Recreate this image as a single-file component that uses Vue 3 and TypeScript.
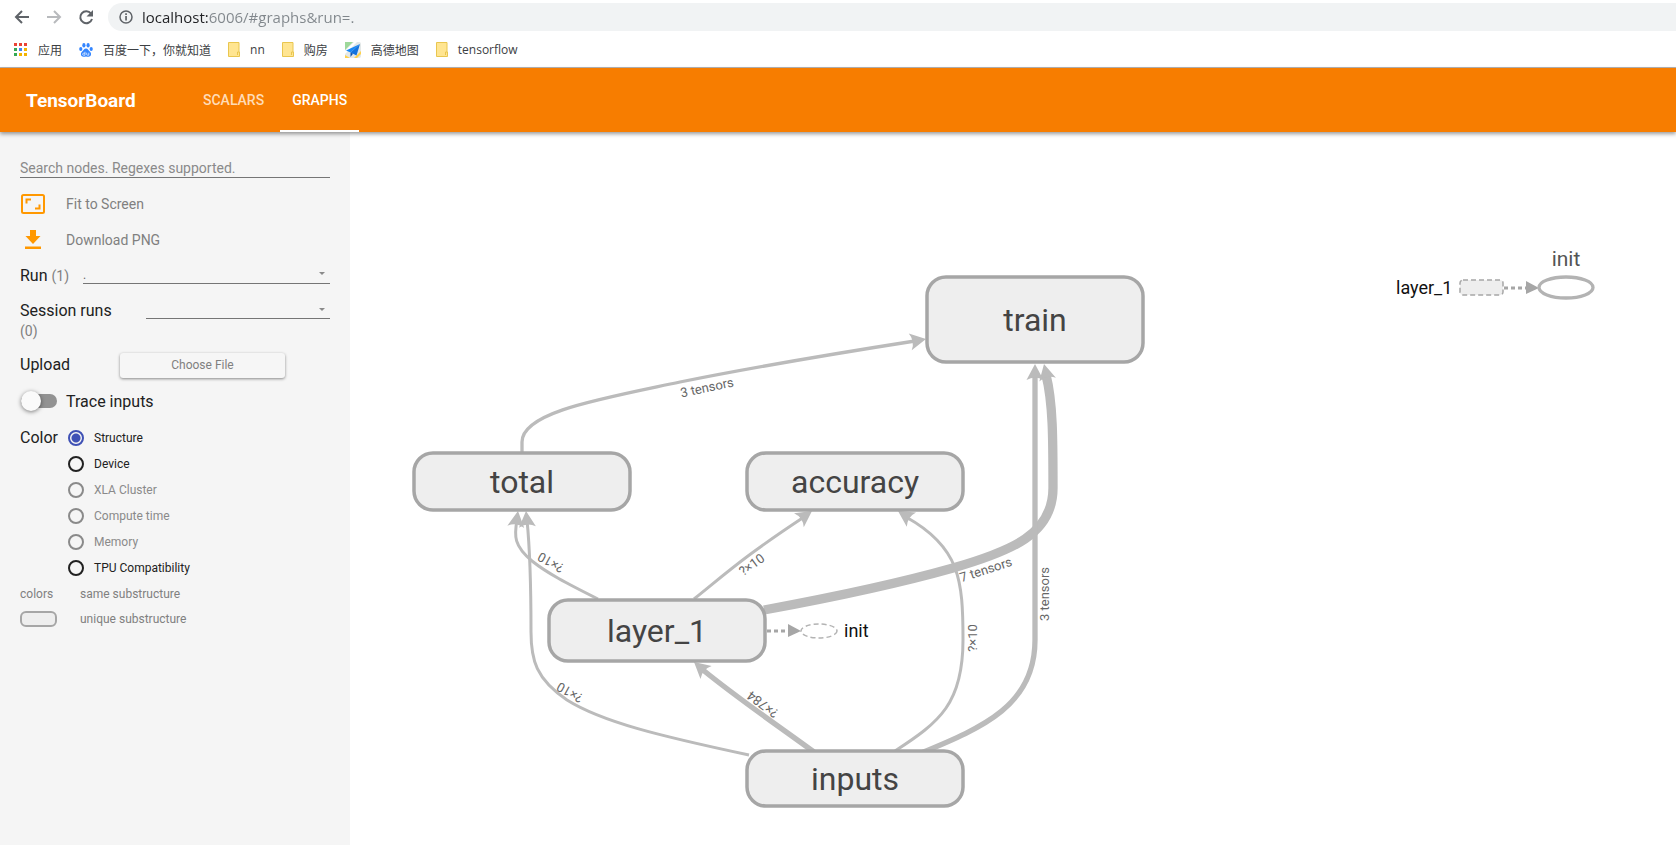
<script setup lang="ts">
import { ref } from 'vue'

interface GraphNode { name: string; x: number; y: number; h: number; base: number }
interface Edge { d: string; width: number; tip: [number, number]; angle: number; label: string; at: [number, number]; turn: number }
interface ColorOption { label: string; disabled: boolean }

const url = ref('localhost:6006/#graphs&run=.')
const search = ref('')
const run = ref('.')
const session = ref('')
const traceInputs = ref(false)
const colorBy = ref('Structure')

const colorOptions: ColorOption[] = [
  { label: 'Structure', disabled: false },
  { label: 'Device', disabled: false },
  { label: 'XLA Cluster', disabled: true },
  { label: 'Compute time', disabled: true },
  { label: 'Memory', disabled: true },
  { label: 'TPU Compatibility', disabled: false },
]

const nodeWidth = 216
const nodes: GraphNode[] = [
  { name: 'train', x: 927, y: 277, h: 85, base: 331 },
  { name: 'total', x: 414, y: 453, h: 57, base: 493 },
  { name: 'accuracy', x: 747, y: 453, h: 57, base: 493 },
  { name: 'layer_1', x: 549, y: 600, h: 61, base: 642 },
  { name: 'inputs', x: 747, y: 751, h: 55, base: 790 },
]

const edges: Edge[] = [
  { d: 'M522 452V442C522 412 600 399 680 382C740 370 800 359 915 341', width: 3.3, tip: [926, 339], angle: -10, label: '3 tensors', at: [707, 388], turn: -12 },
  { d: 'M598 599C566 583 547 573 532 561C514 546 514 536 517 520', width: 3, tip: [518, 511], angle: -82, label: '?×10', at: [551, 562], turn: 209 },
  { d: 'M749 755C660 736 602 722 567 700C536 679 531 660 531 632C531 590 530 550 527 520', width: 3, tip: [526, 511], angle: -95, label: '?×10', at: [570, 692], turn: 209 },
  { d: 'M694 599C730 570 745 556 804 517', width: 3, tip: [812, 511], angle: -35, label: '?×10', at: [752, 565], turn: -36 },
  { d: 'M895 751C940 722 963 703 963 640C963 580 960 547 906 517', width: 3, tip: [898, 511], angle: -147, label: '?×10', at: [973, 638], turn: -90 },
  { d: 'M764 610C840 596 900 583 953 568C1012 551 1053 534 1053 488C1053 440 1053 402 1046 375', width: 9.3, tip: [1044, 364], angle: -103, label: '7 tensors', at: [986, 570], turn: -18 },
  { d: 'M921 753C984 727 1035 705 1035 640V375', width: 5.3, tip: [1035, 364], angle: -90, label: '3 tensors', at: [1045, 594], turn: -90 },
  { d: 'M814 752C770 720 740 700 703 670', width: 5.3, tip: [694, 662], angle: -139, label: '?×784', at: [763, 704], turn: 217 },
]
</script>

<template>
  <div class="window">
    <div class="toolbar">
      <button class="nav" aria-label="Back">
        <svg viewBox="0 0 16 16" width="16" height="16"><path d="M15 8H2M8 2L2 8l6 6" fill="none" stroke="#5f6368" stroke-width="2" /></svg>
      </button>
      <button class="nav" aria-label="Forward">
        <svg viewBox="0 0 16 16" width="16" height="16"><path d="M1 8h13M8 2l6 6-6 6" fill="none" stroke="#b8babd" stroke-width="2" /></svg>
      </button>
      <button class="nav" aria-label="Reload">
        <svg viewBox="0 0 16 16" width="16" height="16">
          <path d="M13 4.5A6 6 0 1 0 14 10" fill="none" stroke="#5f6368" stroke-width="2" />
          <path d="M15 1v6.500H8.500z" fill="#5f6368" />
        </svg>
      </button>
      <label class="address">
        <svg viewBox="0 0 16 16" width="16" height="16">
          <circle cx="8" cy="8" r="6" fill="none" stroke="#5f6368" stroke-width="1.500" />
          <path d="M7.200 7h1.700v4.500H7.200zM7.200 4.300h1.700V6H7.200z" fill="#5f6368" />
        </svg>
        <input v-model="url" type="text" aria-label="Address" />
      </label>
    </div>

    <nav class="bookmarks" aria-label="Bookmarks">
      <a href="#">
        <svg viewBox="0 0 14 14" width="14" height="14">
          <path d="M0 0h3v3H0zM5 0h3v3H5zM10 0h3v3h-3z" fill="#ea4335" />
          <path d="M0 5h3v3H0zM0 10h3v3H0z" fill="#34a853" />
          <path d="M5 5h3v3H5z" fill="#4285f4" /><path d="M5 10h3v3H5zM10 5h3v3h-3zM10 10h3v3h-3z" fill="#f4b400" />
        </svg>应用</a>
      <a href="#">
        <svg viewBox="0 0 14 14" width="14" height="14" fill="#3385ff">
          <ellipse cx="1.800" cy="6" rx="1.600" ry="2.100" /><ellipse cx="4.900" cy="2.300" rx="1.600" ry="2.200" />
          <ellipse cx="9.100" cy="2.300" rx="1.600" ry="2.200" /><ellipse cx="12.200" cy="6" rx="1.600" ry="2.100" />
          <path d="M7 5.500c2 0 2.600 2 4 3.300 2 1.800 1 5-1.500 5-1 0-1.500-.3-2.500-.3s-1.500.3-2.500.3C2 13.800 1 10.600 3 8.800 4.400 7.500 5 5.500 7 5.500z" />
          <path d="M6 8.700v3.500H4.600a1 1 0 0 1 0-2H6M7.700 9.700v1.700q0 .8.800.8h1.300V9.700" fill="none" stroke="#fff" stroke-width=".7" />
        </svg>百度一下，你就知道</a>
      <a href="#"><svg viewBox="0 0 12 15" width="12" height="15"><path d="M.5.5h10.500v9.500h.5v4.500H.5z" fill="#ffe591" stroke="#e9c64f" /><path d="M9.500 13v-3H11" fill="none" stroke="#e9c64f" /></svg>nn</a>
      <a href="#"><svg viewBox="0 0 12 15" width="12" height="15"><path d="M.5.5h10.500v9.500h.5v4.500H.5z" fill="#ffe591" stroke="#e9c64f" /><path d="M9.500 13v-3H11" fill="none" stroke="#e9c64f" /></svg>购房</a>
      <a href="#">
        <svg viewBox="0 0 16 16" width="16" height="16">
          <rect width="16" height="16" rx="2" fill="#e3e8e8" /><path d="M0 0h8L0 8z" fill="#9ed89a" /><path d="M0 9l9-9h3L0 12z" fill="#fff" /><path d="M9 16l7-7v3l-4 4z" fill="#ffd24d" /><path d="M0 13l5 3H0z" fill="#ffd24d" />
          <path d="M15 2L1 8.500l4.500 2z" fill="#1787f5" /><path d="M15 2L5.500 10.500l6 3z" fill="#1273df" /><path d="M5.500 10.500V15l2.500-3.300z" fill="#0a51ad" />
        </svg>高德地图</a>
      <a href="#"><svg viewBox="0 0 12 15" width="12" height="15"><path d="M.5.5h10.500v9.500h.5v4.500H.5z" fill="#ffe591" stroke="#e9c64f" /><path d="M9.500 13v-3H11" fill="none" stroke="#e9c64f" /></svg>tensorflow</a>
    </nav>

    <header class="header">
      <h1>TensorBoard</h1>
      <a href="#scalars" class="tab">SCALARS</a>
      <a href="#graphs" class="tab active" aria-current="page">GRAPHS</a>
    </header>

    <div class="content">
      <aside class="sidebar">
        <input v-model="search" class="search" type="text" placeholder="Search nodes. Regexes supported." aria-label="Search nodes" />
        <button class="action">
          <svg viewBox="0 0 24 20" width="24" height="20"><rect x="1" y="1" width="22" height="18" rx="1.500" fill="none" stroke="#ff9800" stroke-width="2" /><path d="M5.500 9.500v-4H10M18.500 10.500v4H14" fill="none" stroke="#ff9800" stroke-width="2" /></svg>
          Fit to Screen
        </button>
        <button class="action">
          <svg viewBox="0 0 24 20" width="24" height="20"><path d="M9 0h6v6h4.500L12 14 4.500 6H9zM4 16.500h16V19H4z" fill="#ff9800" /></svg>
          Download PNG
        </button>

        <div class="row">
          <label for="run" class="title">Run <small>(1)</small></label>
          <span class="dropdown run"><select id="run" v-model="run"><option value=".">.</option></select></span>
        </div>
        <div class="row session">
          <label for="session" class="title">Session runs <small>(0)</small></label>
          <span class="dropdown"><select id="session" v-model="session"><option value=""></option></select></span>
        </div>
        <div class="row upload">
          <span class="title">Upload</span>
          <button class="choose">Choose File</button>
        </div>
        <label class="trace"><input v-model="traceInputs" type="checkbox" role="switch" />Trace inputs</label>

        <div class="colors" role="radiogroup" aria-labelledby="color-title">
          <span id="color-title" class="title">Color</span>
          <div>
            <label v-for="o in colorOptions" :key="o.label" class="option" :class="{ disabled: o.disabled }">
              <input v-model="colorBy" type="radio" name="color" :value="o.label" :disabled="o.disabled" />{{ o.label }}
            </label>
          </div>
        </div>
        <div class="legend"><span class="key">colors</span>same substructure</div>
        <div class="legend"><span class="key"><i class="swatch"></i></span>unique substructure</div>
      </aside>

      <main class="graph">
        <svg class="scene" viewBox="350 132 1326 713" preserveAspectRatio="xMinYMin meet" role="img" aria-label="Main graph">
          <g v-for="(e, i) in edges" :key="i">
            <path :d="e.d" class="edge" :stroke-width="e.width" />
            <path d="M0 0L-16 -8.500Q-11 0 -16 8.500Z" class="head" :transform="`translate(${e.tip[0]} ${e.tip[1]}) rotate(${e.angle})`" />
          </g>
          <text v-for="(e, i) in edges" :key="'l' + i" y="4" class="edge-label" :transform="`translate(${e.at[0]} ${e.at[1]}) rotate(${e.turn})`">{{ e.label }}</text>

          <g v-for="n in nodes" :key="n.name">
            <rect :x="n.x" :y="n.y" :width="nodeWidth" :height="n.h" rx="19" class="node" />
            <text :x="n.x + nodeWidth / 2" :y="n.base" class="node-label">{{ n.name }}</text>
          </g>

          <path d="M767 631H788" class="reference" />
          <path d="M788 624l13 7-13 6z" class="reference-head" />
          <ellipse cx="819" cy="631" rx="18" ry="7" class="ghost" />
          <text x="844" y="637" class="annotation">init</text>

          <text x="1396" y="294" class="annotation">layer_1</text>
          <rect x="1460" y="280" width="43" height="15" rx="3" class="ghost filled" />
          <path d="M1504 288H1526" class="reference" />
          <path d="M1526 281l13 7-13 6z" class="reference-head" />
          <ellipse cx="1566" cy="287.500" rx="27" ry="10.500" class="op" />
          <text x="1566" y="266" class="op-label">init</text>
        </svg>
      </main>
    </div>
  </div>
</template>

<style>
html, body { margin: 0; height: 100%; }
#app { height: 100%; }
</style>

<style scoped>
.window { min-height: 100vh; display: flex; flex-direction: column; background: #fff; font-family: Roboto, "Noto Sans CJK SC", sans-serif; }
button, input, select { font: inherit; margin: 0; padding: 0; border: 0; background: none; outline: none; color: inherit; border-radius: 0; }
button { cursor: pointer; }
a { text-decoration: none; color: inherit; }
svg { display: block; flex: none; }

.toolbar { display: flex; align-items: center; height: 34px; padding-left: 14px; }
.nav { width: 16px; height: 16px; margin-right: 16px; }
.nav:nth-child(3) { margin-right: 14px; }
.address { display: flex; align-items: center; flex: 1; height: 28px; padding-left: 10px; border-radius: 14px 0 0 14px; background: #f1f3f4; }
.address svg { margin-right: 8px; }
.address input { flex: 1; height: 24px; font: 15px "Open Sans", "Noto Sans", sans-serif; color: transparent; background: linear-gradient(90deg, #202124 66px, #80868b 66px); background-clip: text; -webkit-background-clip: text; }

.bookmarks { display: flex; align-items: center; height: 31px; padding: 0 14px 2px; border-bottom: 1px solid #b6b4b4; font: 12px "Open Sans", "Noto Sans CJK SC", sans-serif; color: #3c4043; }
.bookmarks a { display: flex; align-items: center; gap: 10px; margin-right: 17px; white-space: nowrap; }

.header { position: relative; z-index: 1; display: flex; align-items: center; height: 64px; padding-left: 26px; background: #f77d00; color: #fff; box-shadow: 0 2px 4px rgba(0, 0, 0, .4); }
.header h1 { margin: 0; width: 165px; font-size: 19px; font-weight: 700; }
.tab { box-sizing: border-box; display: flex; align-items: center; height: 64px; margin-right: 4px; padding: 2px 12px 0; border-bottom: 2px solid transparent; font-size: 14px; font-weight: 500; color: #ffdcb7; }
.tab.active { color: #fff; border-bottom-color: #fff; }

.content { flex: 1; display: flex; }
.sidebar { box-sizing: border-box; flex: none; width: 350px; padding: 27px 20px 0; background: #f5f5f5; color: #212121; }
.search { display: block; box-sizing: border-box; width: 100%; height: 19px; margin-bottom: 8px; border-bottom: 1px solid #757575; font-size: 14px; }
.search::placeholder { color: #8a8a8a; opacity: 1; }
.action { display: flex; align-items: center; gap: 21px; width: 100%; height: 36px; padding-left: 1px; font-size: 14px; color: #808080; }

.row { display: flex; align-items: flex-start; justify-content: space-between; height: 30px; padding-top: 6px; }
.title { font-size: 16px; line-height: 24px; color: #212121; }
.title small { font-size: 14px; color: #808080; }
.dropdown { position: relative; width: 184px; height: 18px; border-bottom: 1px solid #757575; }
.dropdown.run { width: 247px; height: 19px; }
.dropdown::after { content: ""; position: absolute; right: 5px; top: 8px; border: 3px solid transparent; border-top-color: #8a8a8a; pointer-events: none; }
.dropdown select { width: 100%; height: 100%; appearance: none; font-size: 12px; color: #666; }
.row.session { height: 46px; }
.session .title { width: 100px; margin-top: 1px; line-height: 20px; }
.session .title small { display: block; }
.row.upload { height: 36px; padding: 1px 0; align-items: center; justify-content: flex-start; }
.upload .title { width: 100px; }
.choose { width: 165px; height: 25px; border-radius: 3px; background: #f6f6f6; box-shadow: 0 1px 3px rgba(0, 0, 0, .45); font-size: 12px; color: #808080; }
.trace { display: flex; align-items: center; gap: 9px; height: 34px; font-size: 16px; }
.trace input { position: relative; appearance: none; width: 36px; height: 14px; margin-left: 1px; border-radius: 7px; background: #929292; }
.trace input::before { content: ""; position: absolute; left: 0; top: -3px; width: 20px; height: 20px; border-radius: 50%; background: #fafafa; box-shadow: 0 1px 4px rgba(0, 0, 0, .5); }
.trace input:checked::before { left: 16px; }
.colors { display: flex; height: 156px; padding-top: 7px; }
.colors .title { width: 48px; line-height: 26px; }
.option { display: flex; align-items: center; gap: 10px; height: 26px; font-size: 12px; color: #212121; }
.option input { appearance: none; box-sizing: border-box; width: 16px; height: 16px; border: 2px solid #212121; border-radius: 50%; }
.option input:checked { border-color: #3f51b5; background: radial-gradient(#3f51b5 4px, transparent 5px); }
.option.disabled { color: #8a8a8a; }
.option.disabled input { border-color: #8a8a8a; }
.legend { display: flex; align-items: center; height: 25px; font-size: 12px; color: #808080; }
.key { width: 60px; }
.swatch { display: block; box-sizing: border-box; width: 37px; height: 16px; border: 2px solid #a6a6a6; border-radius: 6px; background: #eee; }

.graph { position: relative; flex: 1; min-width: 0; }
.scene { width: 100%; height: auto; }
.edge { fill: none; stroke: #bbb; }
.head { fill: #bbb; }
.edge-label { font-size: 13px; text-anchor: middle; fill: #666; }
.node { fill: #eee; stroke: #a6a6a6; stroke-width: 3.5; }
.node-label { font-size: 32px; text-anchor: middle; fill: #444; }
.reference { fill: none; stroke: #a6a6a6; stroke-width: 3px; stroke-dasharray: 4 3; }
.reference-head { fill: #a6a6a6; }
.ghost { fill: none; stroke: #b3b3b3; stroke-width: 1.5; stroke-dasharray: 5 3; }
.ghost.filled { fill: #eee; stroke: #a6a6a6; }
.annotation { font-size: 18px; fill: #111; }
.op { fill: #fff; stroke: #b3b3b3; stroke-width: 3.3; }
.op-label { font-size: 21px; text-anchor: middle; fill: #555; }
</style>
